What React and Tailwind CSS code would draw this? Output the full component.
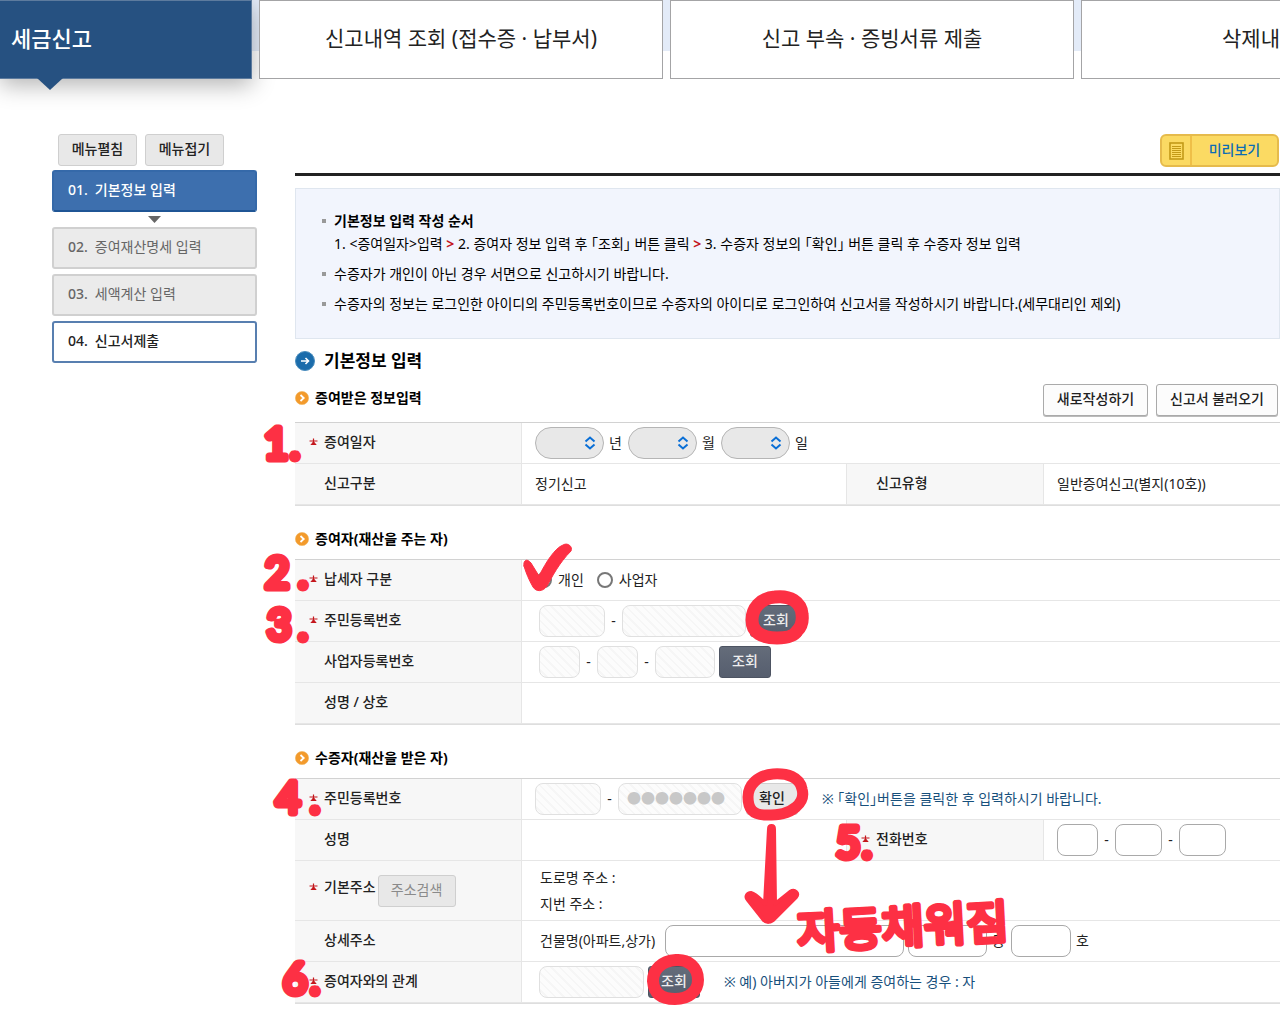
import React from 'react';

const TABS = ['신고내역 조회 (접수증 · 납부서)', '신고 부속 · 증빙서류 제출', '삭제내역 조회'];

const LINE_INPUT = 'h-8 rounded-lg border border-[#a9a9a9] bg-white px-2';
const HATCH_INPUT =
    'h-8 rounded-lg border border-[#e0e0e0] px-2 bg-[repeating-linear-gradient(45deg,#fcfcfc_0px,#fcfcfc_4px,#f6f6f6_4px,#f6f6f6_6px)]';

const Required = () => (
    <svg viewBox="0 0 9 8" className="w-[9px] h-2 shrink-0" aria-hidden="true">
        <path d="M4.5 0.5v5M0.5 3h8M2.5 6.5l2-2.5 2 2.5z" stroke="#c4161c" strokeWidth="1.2" fill="#c4161c" />
    </svg>
);

const Th = ({ children, required, extra }) => (
    <th scope="row" className="h-[41px] border-b border-r border-[#e6e6e6] bg-[#f7f7f7] pl-3.5 text-left font-medium">
        <div className="flex items-center">
            <div className={`flex items-center ${extra ? 'pb-2' : 'pb-0.5'}`}>
                <span className="flex w-[15px] shrink-0">{required && <Required />}</span>
                <span>{children}</span>
            </div>
            {extra}
        </div>
    </th>
);

const Td = ({ children, span }) => (
    <td colSpan={span} className="border-b border-r border-[#e6e6e6] pl-[13px] last:border-r-0">
        <div className="flex items-center whitespace-nowrap">{children}</div>
    </td>
);

const FormTable = ({ children, label }) => (
    <table
        aria-label={label}
        className="w-full table-fixed border-separate border-spacing-0 border-t border-[#d2d2d2] text-[#222] shadow-[0_1px_0_#dedede]"
    >
        <colgroup>
            <col className="w-[227px]" />
            <col className="w-[325px]" />
            <col className="w-[197px]" />
            <col />
        </colgroup>
        <tbody>{children}</tbody>
    </table>
);

const Dash = () => <span className="w-[17px] text-center">-</span>;

const SearchButton = () => (
    <button
        type="button"
        className="ml-1 h-8 w-[52px] rounded-[3px] border border-[#4d5462] bg-gradient-to-b from-[#646c7a] to-[#565e6e] pb-0.5 font-medium text-[#eee]"
    >
        조회
    </button>
);

const DateSelect = ({ unit }) => (
    <label className="flex items-center">
        <span className="relative block">
            <select aria-label={unit} className="block h-8 w-[69px] appearance-none rounded-full border border-[#b5b5b5] bg-[#e8e8e8]">
                <option value=""></option>
            </select>
            <svg viewBox="0 0 12 14" className="pointer-events-none absolute right-2 top-[9px] h-3.5 w-3" fill="none" stroke="#0a6fd6" strokeWidth="2" aria-hidden="true">
                <path d="M1.5 5.5L6 1.5l4.5 4M1.5 8.5L6 12.5l4.5-4" />
            </svg>
        </span>
        <span className="w-6 pl-[5px]">{unit}</span>
    </label>
);

const SectionTitle = ({ children }) => (
    <h3 className="flex items-center gap-1.5 font-bold text-black">
        <svg viewBox="0 0 14 14" className="h-3.5 w-3.5" aria-hidden="true">
            <circle cx="7" cy="7" r="6.6" fill="#f39a2b" stroke="#f0b35a" strokeWidth="0.6" />
            <path d="M5.5 4l3.2 3-3.2 3" fill="none" stroke="#fff" strokeWidth="1.8" />
        </svg>
        {children}
    </h3>
);

const Step = ({ no, children, className }) => (
    <a href="#" className={`flex h-[42px] items-center rounded-[3px] border-2 pb-0.5 pl-3.5 ${className}`}>
        <span className="mr-[7px] font-medium">{no}.</span>
        {children}
    </a>
);

const Notice = ({ children }) => (
    <li className="relative pl-3 before:absolute before:left-0 before:top-2.5 before:h-1 before:w-1 before:bg-[#999]">{children}</li>
);

// Marker notes drawn over the form
const Marks = () => (
    <svg viewBox="0 0 1280 1012" className="pointer-events-none absolute left-0 top-0 h-[1012px] w-[1280px]" fill="none" stroke="#fd3044" strokeLinecap="round" strokeLinejoin="round">
        <g fill="#fd3044" strokeWidth="7" className="font-['Lato'] text-[42px] font-normal">
            <text x="264" y="459">1<tspan x="290">.</tspan></text>
            <text x="265" y="588">2<tspan x="298">.</tspan></text>
            <text x="267" y="640">3<tspan x="298">.</tspan></text>
            <text x="276" y="813">4<tspan x="310">.</tspan></text>
            <text x="836" y="858">5<tspan x="862">.</tspan></text>
            <text x="283" y="994">6<tspan x="310">.</tspan></text>
        </g>
        <text x="798" y="949" fill="#fd3044" strokeWidth="5" transform="rotate(-3 798 949)" className="text-[46px] font-normal">자동채워짐</text>
        <path
            strokeWidth="1"
            fill="#fd3044"
            d="M524 566C523 560 527 558 531 563L539 576C546 562 555 548 563 545C568 542 573 547 571 551C559 563 552 577 547 586C543 592 536 592 533 587C529 580 526 573 524 566Z"
        />
        <path strokeWidth="13" d="M775 597C760 598 752 609 752 620C752 633 762 638 777 638C787 638 794 636 797 631C802 626 803 621 802 614C801 602 790 595 775 597Z" />
        <path strokeWidth="11" d="M773 774C758 775 748 785 748 797C748 809 753 815 766 815C779 815 788 814 796 807C802 802 804 796 802 789C800 777 787 773 773 774Z" />
        <path strokeWidth="12" d="M676 960C661 961 653 970 653 981C654 994 662 999 675 999C689 999 698 991 698 980C698 967 688 959 676 960Z" />
        <path strokeWidth="4" fill="#fd3044" d="M769 829L765 904C761 900 756 894 751 893C747 893 745 897 748 900L763 919C766 923 771 923 775 918L796 897C799 893 795 889 790 892L775 904L774 829C774 825 769 825 769 829Z" />
    </svg>
);

export default function App() {
    return (
        <div className="relative min-h-screen overflow-hidden bg-white font-['Noto_Sans','Noto_Sans_CJK_KR',sans-serif] text-sm leading-6 text-[#222]">
            <nav className="flex gap-[7px] bg-[linear-gradient(#e3ebf8_51px,transparent_51px)] text-[#222]">
                <a href="#" className="relative flex h-[79px] w-[252px] shrink-0 items-center border border-l-0 border-[#5d7b9e] bg-[#265181] pb-1 pl-[11px] text-[22px] font-medium text-white shadow-[0_6px_22px_rgba(0,0,0,0.3)]">
                    세금신고
                    <span className="absolute left-[37px] top-full h-3 w-[26px] bg-[#265181] [clip-path:polygon(0_0,100%_0,50%_100%)]"></span>
                </a>
                {TABS.map((tab, i) => (
                    <a
                        key={tab}
                        href="#"
                        className={`relative flex h-[79px] w-[404px] shrink-0 items-center whitespace-nowrap border border-[#a4a4a6] bg-white pb-1 text-[21px] font-normal ${i === 2 ? 'pl-[140px]' : 'justify-center'}`}
                    >
                        {tab}
                    </a>
                ))}
            </nav>

            <div className="flex gap-[38px] pl-[52px] pt-[55px]">
                <aside className="w-[205px] shrink-0">
                    <div className="flex gap-2 pb-1 pl-1.5">
                        <button type="button" className="h-8 w-[79px] rounded-[3px] border border-[#cfcfcf] bg-[#e8e8e8] pb-0.5 font-medium">메뉴펼침</button>
                        <button type="button" className="h-8 w-[79px] rounded-[3px] border border-[#cfcfcf] bg-[#e8e8e8] pb-0.5 font-medium">메뉴접기</button>
                    </div>
                    <Step no="01" className="border-[#3569a9] border-b-[#1f5595] bg-[#3d6fae] font-medium text-white">기본정보 입력</Step>
                    <div className="flex h-[15px] justify-center pt-1">
                        <span className="h-[7px] w-[13px] bg-[#666] [clip-path:polygon(0_0,100%_0,50%_100%)]"></span>
                    </div>
                    <div className="flex flex-col gap-[5px]">
                        <Step no="02" className="border-[#d0d0d0] bg-[#ebebeb] text-[#666]">증여재산명세 입력</Step>
                        <Step no="03" className="border-[#d0d0d0] bg-[#ebebeb] text-[#666]">세액계산 입력</Step>
                        <Step no="04" className="border-[#587fb0] bg-white font-medium">신고서제출</Step>
                    </div>
                </aside>

                <main className="min-w-0 flex-1">
                    <div className="flex justify-end border-b-[3px] border-[#222] pb-1.5 pr-px">
                        <button type="button" className="flex h-[33px] w-[119px] items-center rounded-md border-2 border-[#e6bb4c] bg-[#fbda63] font-medium text-[#0b6db5]">
                            <span className="flex h-full w-[30px] items-center justify-center border-r-2 border-[#efbf48]">
                                <svg viewBox="0 0 15 18" className="h-[18px] w-[15px]" fill="none" stroke="#c39a18" aria-hidden="true">
                                    <rect x="1" y="1" width="13" height="16" strokeWidth="1.6" />
                                    <path d="M3 4.5h9M3 6.5h9M3 8.5h9M3 10.5h9M3 12.5h9M3 14.5h9" />
                                </svg>
                            </span>
                            <span className="flex-1 pb-0.5 text-center">미리보기</span>
                        </button>
                    </div>

                    <ul className="mt-3 flex h-[151px] flex-col gap-[7px] border border-[#dfe6ef] bg-[#f2f5fd] pl-[26px] pt-5 leading-[23px] text-black [font-feature-settings:'halt']">
                        <Notice>
                            <strong className="block font-bold">기본정보 입력 작성 순서</strong>
                            1. &lt;증여일자&gt;입력 <b className="text-[#c4161c]">&gt;</b> 2. 증여자 정보 입력 후 「조회」 버튼 클릭 <b className="text-[#c4161c]">&gt;</b> 3. 수증자 정보의 「확인」 버튼 클릭 후 수증자 정보 입력
                        </Notice>
                        <Notice>수증자가 개인이 아닌 경우 서면으로 신고하시기 바랍니다.</Notice>
                        <Notice>수증자의 정보는 로그인한 아이디의 주민등록번호이므로 수증자의 아이디로 로그인하여 신고서를 작성하시기 바랍니다.(세무대리인 제외)</Notice>
                    </ul>

                    <h2 className="mt-2.5 flex items-center gap-[9px] text-[17px] font-bold text-black">
                        <svg viewBox="0 0 20 20" className="h-5 w-5" aria-hidden="true">
                            <circle cx="10" cy="10" r="9.5" fill="#1b6cab" stroke="#4b8dbd" />
                            <path d="M6 10h7M10.5 7l3 3-3 3" fill="none" stroke="#fff" strokeWidth="1.6" />
                        </svg>
                        기본정보 입력
                    </h2>

                    <div className="flex h-[49px] items-center justify-between pr-0.5">
                        <SectionTitle>증여받은 정보입력</SectionTitle>
                        <div className="flex gap-2 pt-1">
                            <button type="button" className="h-8 w-[105px] rounded-[3px] border border-[#aaa] bg-[#fcfcfc] pb-0.5 font-medium shadow-[0_1px_0_#bbb]">새로작성하기</button>
                            <button type="button" className="h-8 w-[122px] rounded-[3px] border border-[#aaa] bg-[#fcfcfc] pb-0.5 font-medium shadow-[0_1px_0_#bbb]">신고서 불러오기</button>
                        </div>
                    </div>
                    <FormTable label="증여받은 정보입력">
                        <tr>
                            <Th required>증여일자</Th>
                            <Td span={3}>
                                <DateSelect unit="년" />
                                <DateSelect unit="월" />
                                <DateSelect unit="일" />
                            </Td>
                        </tr>
                        <tr>
                            <Th>신고구분</Th>
                            <Td>정기신고</Td>
                            <Th>신고유형</Th>
                            <Td>일반증여신고(별지(10호))</Td>
                        </tr>
                    </FormTable>

                    <div className="flex h-[54px] items-end pb-2"><SectionTitle>증여자(재산을 주는 자)</SectionTitle></div>
                    <FormTable label="증여자">
                        <tr>
                            <Th required>납세자 구분</Th>
                            <Td span={3}>
                                <label className="mr-[13px] flex items-center gap-1.5">
                                    <input type="radio" name="payer" className="ml-px h-4 w-4 appearance-none rounded-full border-2 border-[#777] bg-white" />
                                    개인
                                </label>
                                <label className="flex items-center gap-1.5">
                                    <input type="radio" name="payer" className="h-4 w-4 appearance-none rounded-full border-2 border-[#777] bg-white" />
                                    사업자
                                </label>
                            </Td>
                        </tr>
                        <tr>
                            <Th required>주민등록번호</Th>
                            <Td span={3}>
                                <input aria-label="주민등록번호 앞자리" className={`${HATCH_INPUT} ml-1 w-[66px]`} />
                                <Dash />
                                <input aria-label="주민등록번호 뒷자리" className={`${HATCH_INPUT} w-[124px]`} />
                                <SearchButton />
                            </Td>
                        </tr>
                        <tr>
                            <Th>사업자등록번호</Th>
                            <Td span={3}>
                                <input aria-label="사업자등록번호 1" className={`${HATCH_INPUT} ml-1 w-[41px]`} />
                                <Dash />
                                <input aria-label="사업자등록번호 2" className={`${HATCH_INPUT} w-[41px]`} />
                                <Dash />
                                <input aria-label="사업자등록번호 3" className={`${HATCH_INPUT} w-[60px]`} />
                                <SearchButton />
                            </Td>
                        </tr>
                        <tr>
                            <Th>성명 / 상호</Th>
                            <Td span={3}></Td>
                        </tr>
                    </FormTable>

                    <div className="flex h-[54px] items-end pb-2"><SectionTitle>수증자(재산을 받은 자)</SectionTitle></div>
                    <FormTable label="수증자">
                        <tr>
                            <Th required>주민등록번호</Th>
                            <Td span={3}>
                                <input aria-label="수증자 주민등록번호 앞자리" className={`${HATCH_INPUT} w-[66px]`} />
                                <Dash />
                                <input aria-label="수증자 주민등록번호 뒷자리" readOnly value="●●●●●●●" className={`${HATCH_INPUT} w-[124px] pb-1 text-[#c8c8c8]`} />
                                <button type="button" className="ml-1 h-8 w-[52px] rounded-[3px] border border-[#cfcfcf] bg-[#e8e8e8] pb-0.5 font-medium">확인</button>
                                <span className="ml-6 text-[#17507c] [font-feature-settings:'halt']">※ 「확인」버튼을 클릭한 후 입력하시기 바랍니다.</span>
                            </Td>
                        </tr>
                        <tr>
                            <Th>성명</Th>
                            <Td></Td>
                            <Th required>전화번호</Th>
                            <Td>
                                <input aria-label="전화번호 1" className={`${LINE_INPUT} w-[41px]`} />
                                <Dash />
                                <input aria-label="전화번호 2" className={`${LINE_INPUT} w-[47px]`} />
                                <Dash />
                                <input aria-label="전화번호 3" className={`${LINE_INPUT} w-[47px]`} />
                            </Td>
                        </tr>
                        <tr className="h-[60px]">
                            <Th
                                required
                                extra={<button type="button" className="ml-0.5 h-8 w-[78px] rounded-[3px] border border-[#cfcfcf] bg-[#e8e8e8] pb-0.5 font-normal text-[#8a8a8a]">주소검색</button>}
                            >
                                기본주소
                            </Th>
                            <Td span={3}>
                                <div className="pl-[5px] leading-[26px]">
                                    <p>도로명 주소 :</p>
                                    <p>지번 주소 :</p>
                                </div>
                            </Td>
                        </tr>
                        <tr>
                            <Th>상세주소</Th>
                            <Td span={3}>
                                <label htmlFor="building" className="w-[130px] pl-[5px]">건물명(아파트,상가)</label>
                                <input id="building" className={`${LINE_INPUT} w-[239px]`} />
                                <input id="dong" className={`${LINE_INPUT} ml-1 w-[79px]`} />
                                <label htmlFor="dong" className="w-6 pl-[5px]">동</label>
                                <input id="ho" className={`${LINE_INPUT} w-[60px]`} />
                                <label htmlFor="ho" className="pl-[5px]">호</label>
                            </Td>
                        </tr>
                        <tr>
                            <Th required>증여자와의 관계</Th>
                            <Td span={3}>
                                <input aria-label="증여자와의 관계" className={`${HATCH_INPUT} ml-1 w-[105px]`} />
                                <SearchButton />
                                <span className="ml-6 text-[#17507c]">※ 예) 아버지가 아들에게 증여하는 경우 : 자</span>
                            </Td>
                        </tr>
                    </FormTable>
                </main>
            </div>
            <Marks />
        </div>
    );
}
